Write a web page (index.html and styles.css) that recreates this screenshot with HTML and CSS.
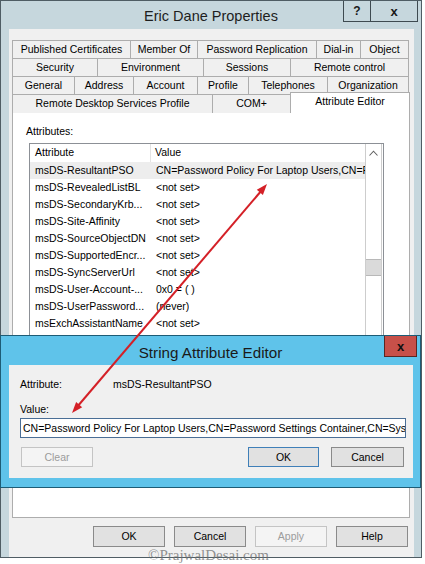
FILE: index.html
```html
<!DOCTYPE html>
<html>
<head>
<meta charset="utf-8">
<link rel="stylesheet" href="styles.css">
</head>
<body>
<div class="screen">
  <div class="win">
    <div class="tbar">
      <div></div>
      <div class="ttl">Eric Dane Properties</div>
      <div class="tbtns"><span class="tb q">?</span><span class="tb x">x</span></div>
    </div>
    <div class="client">
      <div class="tabs">
        <div class="trow r1">
          <div class="tab">Published Certificates</div>
          <div class="tab">Member Of</div>
          <div class="tab">Password Replication</div>
          <div class="tab">Dial-in</div>
          <div class="tab">Object</div>
        </div>
        <div class="trow r2">
          <div class="tab">Security</div>
          <div class="tab">Environment</div>
          <div class="tab">Sessions</div>
          <div class="tab">Remote control</div>
        </div>
        <div class="trow r3">
          <div class="tab">General</div>
          <div class="tab">Address</div>
          <div class="tab">Account</div>
          <div class="tab">Profile</div>
          <div class="tab">Telephones</div>
          <div class="tab">Organization</div>
        </div>
        <div class="trow r4">
          <div class="tab">Remote Desktop Services Profile</div>
          <div class="tab">COM+</div>
          <div class="tab sel">Attribute Editor</div>
        </div>
      </div>
      <div class="panel">
        <div class="lbl">Attributes:</div>
        <div class="list">
          <div class="lcols">
            <div class="lhead"><span class="c1">Attribute</span><span class="c2">Value</span></div>
            <div class="lrow lsel"><span class="c1">msDS-ResultantPSO</span><span class="c2">CN=Password Policy For Laptop Users,CN=Password Settings Container</span></div>
            <div class="lrow"><span class="c1">msDS-RevealedListBL</span><span class="c2">&lt;not set&gt;</span></div>
            <div class="lrow"><span class="c1">msDS-SecondaryKrb...</span><span class="c2">&lt;not set&gt;</span></div>
            <div class="lrow"><span class="c1">msDS-Site-Affinity</span><span class="c2">&lt;not set&gt;</span></div>
            <div class="lrow"><span class="c1">msDS-SourceObjectDN</span><span class="c2">&lt;not set&gt;</span></div>
            <div class="lrow"><span class="c1">msDS-SupportedEncr...</span><span class="c2">&lt;not set&gt;</span></div>
            <div class="lrow"><span class="c1">msDS-SyncServerUrl</span><span class="c2">&lt;not set&gt;</span></div>
            <div class="lrow"><span class="c1">msDS-User-Account-...</span><span class="c2">0x0 = ( )</span></div>
            <div class="lrow"><span class="c1">msDS-UserPassword...</span><span class="c2">(never)</span></div>
            <div class="lrow"><span class="c1">msExchAssistantName</span><span class="c2">&lt;not set&gt;</span></div>
          </div>
          <div class="vscroll">
            <div class="up"><svg width="9" height="6" viewBox="0 0 9 6"><path d="M0.5 5.5 L4.5 1.2 L8.5 5.5" fill="none" stroke="#606060" stroke-width="1.1"/></svg></div>
            <div class="thumb"></div>
          </div>
        </div>
      </div>
      <div class="btns">
        <div class="btn">OK</div>
        <div class="btn">Cancel</div>
        <div class="btn dis">Apply</div>
        <div class="btn">Help</div>
      </div>
    </div>
  </div>

  <div class="dlg">
    <div class="dbar">
      <div></div>
      <div class="dttl">String Attribute Editor</div>
      <div class="dbtns"><span class="dclose">x</span></div>
    </div>
    <div class="dclient">
      <div class="drow"><span class="dlab">Attribute:</span><span>msDS-ResultantPSO</span></div>
      <div class="vlab">Value:</div>
      <div class="tbox">CN=Password Policy For Laptop Users,CN=Password Settings Container,CN=System,DC=prajwal,DC=local</div>
      <div class="dbtnrow">
        <div class="btn dis clear">Clear</div>
        <div class="sp"></div>
        <div class="btn def">OK</div>
        <div class="btn">Cancel</div>
      </div>
    </div>
  </div>

  <svg class="arrow" width="425" height="564" viewBox="0 0 425 564">
    <line x1="262" y1="190" x2="77" y2="407" stroke="#d42027" stroke-width="2"/>
    <polygon points="267,184 262.9,195 256.8,189.8" fill="#d42027"/>
    <polygon points="72,413 82.2,407.2 76.1,402" fill="#d42027"/>
  </svg>

  <div class="wm">©PrajwalDesai.com</div>
</div>
</body>
</html>
```

FILE: styles.css
```css
* { box-sizing: border-box; }
html, body { margin: 0; padding: 0; }
body {
  font-family: "Liberation Sans", Arial, sans-serif;
  font-size: 10.5px;
  color: #000;
  background: #ffffff;
}
.screen {
  position: relative;
  width: 425px;
  height: 564px;
  overflow: hidden;
  background: #ffffff;
}
.win {
  width: 422px;
  height: 558px;
  border: 1px solid #4f5d64;
  background: #c6d7dd;
  display: flex;
  flex-direction: column;
}
.tbar {
  height: 28px;
  display: grid;
  grid-template-columns: 1fr auto 1fr;
  align-items: center;
}
.ttl {
  font-size: 14.5px;
  color: #1e1e1e;
  padding-top: 1px;
}
.tbtns {
  align-self: start;
  justify-self: end;
  display: flex;
  margin-right: 3px;
}
.tb {
  height: 21px;
  border-bottom: 1px solid #3e4a50;
  border-left: 1px solid #3e4a50;
  font-weight: bold;
  font-size: 12px;
  color: #1a1a1a;
  display: flex;
  align-items: center;
  justify-content: center;
}
.tb.q { width: 27px; }
.tb.x { width: 48px; border-right: 1px solid #3e4a50; font-size: 13px; }

.client {
  margin: 0 7px 0 8px;
  flex: 1;
  background: #f0f0f0;
  padding: 11px 4px 0 3px;
}
.trow {
  display: grid;
  height: 18px;
}
.r1 { grid-template-columns: 118px 67px 119px 44px 49px; }
.r2 { grid-template-columns: 85px 106px 87px 119px; }
.r3 { grid-template-columns: 62px 59px 64px 51px 79px 82px; }
.r4 { grid-template-columns: 200px 78px 120px; }
.tab {
  border-top: 1px solid #adadad;
  border-left: 1px solid #adadad;
  background: #f0f0f0;
  text-align: center;
  line-height: 16px;
  white-space: nowrap;
  overflow: hidden;
}
.tab:last-child { border-right: 1px solid #adadad; }
.tab.sel {
  position: relative;
  z-index: 1;
  background: #ffffff;
  margin-top: -2px;
  height: 21px;
  line-height: 17px;
}
.panel {
  height: 406px;
  border: 1px solid #adadad;
  background: #ffffff;
}
.lbl {
  padding: 11px 0 0 13px;
  line-height: 14px;
}
.list {
  margin: 5px 0 0 16px;
  width: 355px;
  height: 340px;
  border: 1px solid #8c9096;
  display: flex;
  padding-right: 1px;
}
.lcols {
  width: 335px;
  overflow: hidden;
}
.lhead, .lrow {
  display: flex;
  white-space: nowrap;
}
.lhead { height: 18px; line-height: 17px; }
.lrow { height: 17px; line-height: 17px; }
.lsel { background: #ededed; }
.c1 {
  width: 121px;
  flex: none;
  padding-left: 5px;
  overflow: hidden;
}
.lhead .c1 { border-right: 1px solid #e3e3e3; }
.c2 {
  padding-left: 5px;
  overflow: hidden;
}
.lhead .c2 { padding-left: 4px; }
.vscroll {
  width: 17px;
  border-left: 1px solid #cdcdcd;
  border-right: 1px solid #cdcdcd;
  background: #ffffff;
}
.up {
  height: 17px;
  display: flex;
  align-items: center;
  justify-content: center;
}
.thumb {
  margin-top: 98px;
  height: 17px;
  background: #dadada;
  border-top: 1px solid #b8b8b8;
  border-bottom: 1px solid #b8b8b8;
}
.btns {
  display: flex;
  justify-content: flex-end;
  gap: 9px;
  margin-top: 8px;
  padding-right: 2px;
}
.btn {
  width: 72px;
  height: 21px;
  border: 1px solid #8a8a8a;
  background: #e1e1e1;
  text-align: center;
  line-height: 19px;
}
.btn.dis {
  border-color: #c4c4c4;
  background: #f4f4f4;
  color: #9c9c9c;
}

.dlg {
  position: absolute;
  left: 0;
  top: 335px;
  width: 421px;
  height: 153px;
  border: 1px solid #1d5c76;
  background: #5fc3ea;
  display: flex;
  flex-direction: column;
}
.dbar {
  height: 29px;
  display: grid;
  grid-template-columns: 1fr auto 1fr;
  align-items: center;
}
.dttl {
  font-size: 15.2px;
  color: #1a1a1a;
  padding-top: 3px;
}
.dbtns {
  align-self: start;
  justify-self: end;
  margin-right: 3px;
}
.dclose {
  display: flex;
  align-items: center;
  justify-content: center;
  width: 33px;
  height: 21px;
  background: #c75049;
  border: 1px solid #5a2622;
  border-top: none;
  font-weight: bold;
  font-size: 13px;
  color: #111;
}
.dclient {
  margin: 0 7px 0 8px;
  height: 113px;
  background: #f0f0f0;
  padding: 12px 0 0 11px;
}
.drow {
  display: flex;
  line-height: 14px;
}
.dlab { width: 93px; }
.vlab {
  margin-top: 11px;
  line-height: 14px;
}
.tbox {
  margin-top: 2px;
  width: 386px;
  height: 20px;
  border: 1px solid #4a6e96;
  background: #ffffff;
  padding-left: 2px;
  line-height: 18px;
  white-space: nowrap;
  overflow: hidden;
}
.dbtnrow {
  display: flex;
  margin-top: 9px;
  gap: 12px;
  padding-right: 9px;
}
.dbtnrow .sp { flex: 1; }
.btn.clear { margin-left: 1px; }
.dbtnrow .btn { height: 20px; line-height: 18px; }
.btn.def { border-color: #3f7fb8; width: 71px; }
.dbtnrow .btn:last-child { width: 73px; }

.arrow {
  position: absolute;
  left: 0;
  top: 0;
  pointer-events: none;
}
.wm {
  position: absolute;
  left: 148px;
  top: 546px;
  font-family: "Liberation Serif", "Times New Roman", serif;
  font-size: 15px;
  line-height: 18px;
  color: rgba(110, 110, 110, 0.75);
  pointer-events: none;
}
```
